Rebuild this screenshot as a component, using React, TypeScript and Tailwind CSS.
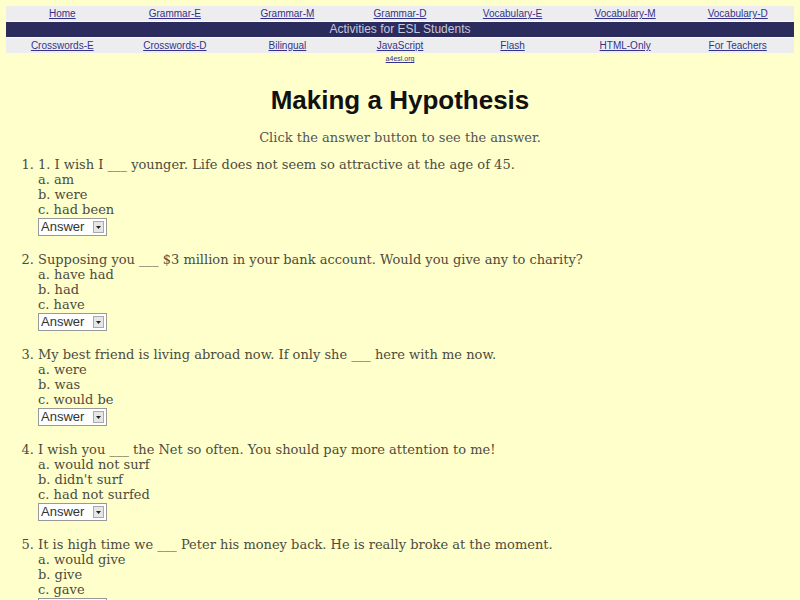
import React from 'react'

const topLinks = ['Home', 'Grammar-E', 'Grammar-M', 'Grammar-D', 'Vocabulary-E', 'Vocabulary-M', 'Vocabulary-D']
const bottomLinks = ['Crosswords-E', 'Crosswords-D', 'Bilingual', 'JavaScript', 'Flash', 'HTML-Only', 'For Teachers']

const questions = [
  { q: '1. I wish I ___ younger. Life does not seem so attractive at the age of 45.', a: ['am', 'were', 'had been'] },
  { q: 'Supposing you ___ $3 million in your bank account. Would you give any to charity?', a: ['have had', 'had', 'have'] },
  { q: 'My best friend is living abroad now. If only she ___ here with me now.', a: ['were', 'was', 'would be'] },
  { q: 'I wish you ___ the Net so often. You should pay more attention to me!', a: ['would not surf', "didn't surf", 'had not surfed'] },
  { q: 'It is high time we ___ Peter his money back. He is really broke at the moment.', a: ['would give', 'give', 'gave'] },
]

function NavRow({ links }: { links: string[] }) {
  return (
    <div className="grid grid-cols-7 bg-[#ededf0] h-[15px] items-center">
      {links.map(l => (
        <a key={l} href="#" className="text-center text-[10px] leading-[15px] text-[#333388] underline">
          {l}
        </a>
      ))}
    </div>
  )
}

function AnswerSelect() {
  return (
    <div className="relative w-[69px] h-[18px] mt-[1px]">
      <select className="appearance-none w-full h-full bg-white border border-[#999] pl-[2px] text-[13px] leading-[16px] text-[#333] font-['Liberation_Sans',sans-serif] outline-none">
        <option>Answer</option>
      </select>
      <span className="pointer-events-none absolute right-[3px] top-[3px] w-[11px] h-[12px] bg-[#e6e6e6] border border-[#aaa] flex items-center justify-center">
        <svg width="5" height="3" viewBox="0 0 5 3">
          <path d="M0 0h5L2.5 3z" fill="#222" />
        </svg>
      </span>
    </div>
  )
}

export default function App() {
  return (
    <div className="min-h-[600px] bg-[#ffffcc] font-['DejaVu_Serif',serif] text-[#4c4c3e] pt-[6px] px-[6px] overflow-hidden">
      <div className="font-['Liberation_Sans',sans-serif]">
        <NavRow links={topLinks} />
        <div className="bg-[#2b2b5e] h-[15px] mt-[1px] flex items-center justify-center">
          <span className="text-[12px] leading-[15px] text-[#c8c8dc]">Activities for ESL Students</span>
        </div>
        <div className="mt-[1px]">
          <NavRow links={bottomLinks} />
        </div>
        <div className="grid grid-cols-7 mt-[1px]">
          <span className="col-start-4 text-center text-[7px] leading-[9px] text-[#333388] underline">a4esl.org</span>
        </div>
      </div>

      <h1 className="text-center mt-[22px] text-[26px] leading-[30px] font-bold text-[#111] font-['Liberation_Sans',sans-serif]">
        Making a Hypothesis
      </h1>
      <p className="text-center mt-[15px] text-[13px] leading-[16px] text-[#555]">Click the answer button to see the answer.</p>

      <ol className="list-decimal pl-[32px] mt-[11px] text-[13px] leading-[15px]">
        {questions.map((item, i) => (
          <li key={i} className="mb-[16px]">
            <div>{item.q}</div>
            {item.a.map((ans, j) => (
              <div key={j}>
                {String.fromCharCode(97 + j)}. {ans}
              </div>
            ))}
            <AnswerSelect />
          </li>
        ))}
      </ol>
    </div>
  )
}
